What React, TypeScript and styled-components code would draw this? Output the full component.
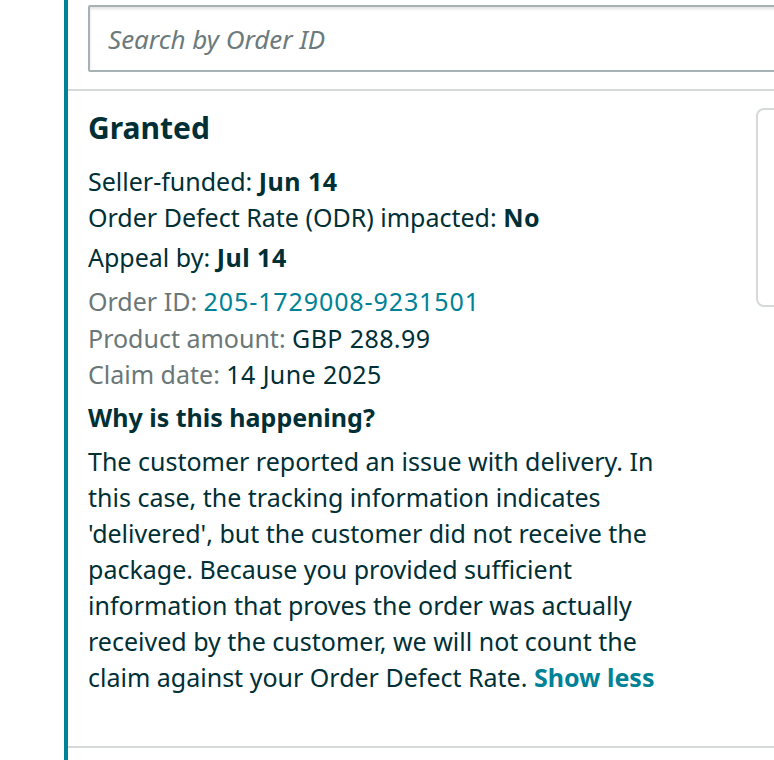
import React from "react";
import styled, { createGlobalStyle } from "styled-components";

const GlobalStyle = createGlobalStyle`
  html, body {
    margin: 0;
    padding: 0;
    background: #ffffff;
    overflow: hidden;
  }
  body {
    font-family: "Noto Sans", "Open Sans", "Liberation Sans", sans-serif;
    color: #002f36;
  }
`;

const Page = styled.div`
  width: 774px;
  height: 760px;
  padding-left: 64px;
  box-sizing: border-box;
  overflow: hidden;
`;

const Panel = styled.section`
  border-left: 4px solid #008296;
  height: 760px;
  width: 800px;
  box-sizing: border-box;
`;

const SearchRow = styled.div`
  padding: 5px 0 17px 20px;
`;

const SearchInput = styled.input`
  display: block;
  width: 740px;
  height: 67px;
  box-sizing: border-box;
  border: 2px solid #a6b1b4;
  border-radius: 2px;
  box-shadow: inset 0 2px 3px rgba(15, 17, 17, 0.12);
  padding: 0 18px;
  font-family: inherit;
  font-size: 26px;
  color: #002f36;
  outline: none;
  &::placeholder {
    color: #6b7a7c;
    font-style: italic;
  }
`;

const Divider = styled.hr`
  margin: 0;
  border: 0;
  height: 2px;
  background: #d5d9d9;
`;

const Body = styled.div`
  display: flex;
  align-items: flex-start;
  gap: 40px;
  padding: 17px 0 0 20px;
  height: 655px;
  box-sizing: border-box;
`;

const Details = styled.div`
  width: 628px;
  flex: none;
`;

const Title = styled.h2`
  margin: 0 0 15px;
  font-size: 30px;
  line-height: 40px;
  font-weight: 700;
  color: #002f36;
`;

const Line = styled.div<{ $gap?: number }>`
  font-size: 25px;
  line-height: 36px;
  margin-top: ${(p) => p.$gap ?? 0}px;
  color: #002f36;
`;

const Strong = styled.b`
  font-weight: 700;
  letter-spacing: 0.5px;
`;

const MetaLine = styled.div<{ $gap?: number }>`
  font-size: 25px;
  line-height: 36.5px;
  margin-top: ${(p) => p.$gap ?? 0}px;
`;

const Label = styled.span`
  color: #6b7777;
`;

const Value = styled.span`
  color: #002f36;
  letter-spacing: 0.4px;
`;

const Link = styled.a`
  color: #008296;
  text-decoration: none;
  letter-spacing: 0.9px;
`;

const Heading = styled.h3`
  margin: 6px 0 8px;
  font-size: 25px;
  line-height: 36px;
  font-weight: 700;
  color: #002f36;
`;

const Paragraph = styled.p`
  margin: 0;
  font-size: 25px;
  line-height: 36px;
  color: #002f36;
  width: 585px;
`;

const ShowLess = styled.a`
  color: #008296;
  font-weight: 700;
  text-decoration: none;
`;

const SideCard = styled.div`
  flex: none;
  width: 200px;
  height: 199px;
  border: 2px solid #d5d9d9;
  border-radius: 8px;
  box-sizing: border-box;
`;

export default function App() {
  return (
    <>
      <GlobalStyle />
      <Page>
        <Panel>
          <SearchRow>
            <SearchInput placeholder="Search by Order ID" />
          </SearchRow>
          <Divider />
          <Body>
            <Details>
              <Title>Granted</Title>
              <Line>
                Seller-funded: <Strong>Jun 14</Strong>
              </Line>
              <Line>
                Order Defect Rate (ODR) impacted: <Strong>No</Strong>
              </Line>
              <Line $gap={4}>
                Appeal by: <Strong>Jul 14</Strong>
              </Line>
              <MetaLine $gap={8}>
                <Label>Order ID: </Label>
                <Link href="#">205-1729008-9231501</Link>
              </MetaLine>
              <MetaLine>
                <Label>Product amount: </Label>
                <Value>GBP 288.99</Value>
              </MetaLine>
              <MetaLine>
                <Label>Claim date: </Label>
                <Value>14 June 2025</Value>
              </MetaLine>
              <Heading>Why is this happening?</Heading>
              <Paragraph>
                The customer reported an issue with delivery. In this case, the
                tracking information indicates 'delivered', but the customer did
                not receive the package. Because you provided sufficient
                information that proves the order was actually received by the
                customer, we will not count the claim against your Order Defect
                Rate. <ShowLess href="#">Show less</ShowLess>
              </Paragraph>
            </Details>
            <SideCard />
          </Body>
          <Divider />
        </Panel>
      </Page>
    </>
  );
}
